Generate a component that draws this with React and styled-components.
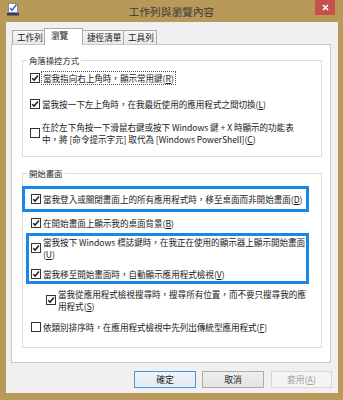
import React from 'react';
import styled, { createGlobalStyle } from 'styled-components';

const GlobalStyle = createGlobalStyle`
  html, body {
    margin: 0;
    padding: 0;
    background: #fff;
  }
  body {
    font-family: "Noto Sans CJK TC", "Noto Sans", sans-serif;
  }
`;

const Window = styled.div`
  width: 343px;
  height: 400px;
  box-sizing: border-box;
  background: #b8995a;
  display: flex;
  flex-direction: column;
  padding-bottom: 7px;
`;

const TitleBar = styled.div`
  height: 22px;
  display: grid;
  grid-template-columns: 1fr auto 1fr;
  align-items: start;
`;

const AppIcon = styled.div`
  padding: 3px 0 0 7px;
  display: flex;
`;

const Title = styled.div`
  font-size: 10.6px;
  line-height: 23px;
  color: #3b3b3b;
  letter-spacing: 0.1px;
`;

const CloseButton = styled.div`
  justify-self: end;
  width: 20px;
  height: 15px;
  margin-right: 8px;
  background: #c7504f;
  display: flex;
  align-items: center;
  justify-content: center;
`;

const Body = styled.div`
  flex: 1;
  margin: 0 5px 0 6px;
  background: #f0f0f0;
  display: flex;
  flex-direction: column;
  padding: 6px 7px 5px 5px;
  box-sizing: border-box;
`;

const TabRow = styled.div`
  display: flex;
  align-items: flex-end;
  padding-left: 1px;
  position: relative;
  z-index: 1;
  margin-bottom: -1px;
`;

const Tab = styled.div`
  width: ${(p) => p.$w}px;
  height: ${(p) => (p.$active ? 17 : 15)}px;
  box-sizing: border-box;
  border: 1px solid #acacac;
  border-bottom: ${(p) => (p.$active ? 'none' : '1px solid #c9c9c9')};
  margin-left: ${(p) => p.$ml || 0}px;
  background: ${(p) => (p.$active ? '#fff' : 'linear-gradient(#f6f6f6, #e9e9e9)')};
  font-size: 8.6px;
  line-height: ${(p) => (p.$active ? 13 : 13)}px;
  padding-left: ${(p) => p.$pl}px;
  color: #1a1a1a;
  white-space: nowrap;
`;

const Panel = styled.div`
  flex: 1;
  background: #fff;
  border: 1px solid #c9c9c9;
  padding: 9px 8px 0 10px;
  display: flex;
  flex-direction: column;
  gap: 10px;
`;

const Group = styled.fieldset`
  margin: 0;
  padding: ${(p) => p.$pad};
  border: 1px solid #dcdcdc;
  min-width: 0;
  display: flex;
  flex-direction: column;
`;

const Legend = styled.legend`
  font-size: 8.4px;
  line-height: 12px;
  color: #2a2a2a;
  padding: 0 2px;
  margin-left: 4px;
`;

const Row = styled.div`
  display: flex;
  align-items: center;
  gap: 2px;
  margin-top: ${(p) => p.$mt || 0}px;
  margin-left: ${(p) => p.$ml || 0}px;
`;

const Label = styled.span`
  font-size: 8.6px;
  line-height: 12px;
  white-space: nowrap;
  color: #1a1a1a;
  letter-spacing: -0.05px;
`;

const FocusLabel = styled(Label)`
  outline: 1px dotted #555;
  outline-offset: 0;
  padding: 0 1px;
`;

const Box = styled.span`
  width: 10px;
  height: 10px;
  flex: none;
  box-sizing: border-box;
  border: 1px solid #333;
  background: #fff;
  display: flex;
  align-items: center;
  justify-content: center;
`;

const Highlight = styled.div`
  box-sizing: border-box;
  border: 3px solid #1b87e6;
  width: ${(p) => p.$w}px;
  margin-left: ${(p) => p.$ml}px;
  margin-top: ${(p) => p.$mt}px;
  padding: ${(p) => p.$pad};
  display: flex;
  flex-direction: column;
`;

const ButtonRow = styled.div`
  display: flex;
  justify-content: flex-end;
  gap: 6px;
  margin-top: 8px;
  margin-right: -1px;
`;

const Button = styled.div`
  width: ${(p) => p.$w || 62}px;
  height: 17px;
  box-sizing: border-box;
  border: 1px solid ${(p) => (p.$primary ? '#4a94d6' : p.$disabled ? '#d7d7d7' : '#acacac')};
  background: ${(p) => (p.$disabled ? '#f4f4f4' : p.$primary ? 'linear-gradient(#eef4fa, #e3ebf3)' : 'linear-gradient(#efefef, #e3e3e3)')};
  color: ${(p) => (p.$disabled ? '#a3a3a3' : '#1a1a1a')};
  font-size: 8.8px;
  line-height: 15px;
  text-align: center;
  margin-left: ${(p) => p.$ml || 0}px;
`;

const Check = ({ on }) => (
  <Box>
    {on && (
      <svg width="8" height="8" viewBox="0 0 8 8">
        <path d="M1.2 4.2 L3.1 6.1 L6.9 1.6" fill="none" stroke="#1e1e1e" strokeWidth="1.5" />
      </svg>
    )}
  </Box>
);

const Item = ({ on, children, mt, ml, focus }) => (
  <Row $mt={mt} $ml={ml}>
    <Check on={on} />
    {focus ? <FocusLabel>{children}</FocusLabel> : <Label>{children}</Label>}
  </Row>
);

export default function App() {
  return (
    <>
      <GlobalStyle />
      <Window lang="zh-TW">
        <TitleBar>
          <AppIcon>
            <svg width="12" height="13" viewBox="0 0 12 13">
              <rect x="1.5" y="0.5" width="9" height="9" fill="#fff" stroke="#8a8a8a" />
              <path d="M3 5 L5 7.2 L9.5 1.5" fill="none" stroke="#2a6fd0" strokeWidth="1.6" />
              <rect x="0" y="10" width="12" height="2.5" fill="#2f3d62" />
            </svg>
          </AppIcon>
          <Title>工作列與瀏覽內容</Title>
          <CloseButton>
            <svg width="7" height="7" viewBox="0 0 7 7">
              <path d="M1 1 L6 6 M6 1 L1 6" stroke="#fff" strokeWidth="1.6" />
            </svg>
          </CloseButton>
        </TitleBar>
        <Body>
          <TabRow>
            <Tab $w={33} $pl={4}>工作列</Tab>
            <Tab $w={39} $pl={6} $active $ml={-1}>瀏覽</Tab>
            <Tab $w={42} $pl={4} $ml={-1}>捷徑清單</Tab>
            <Tab $w={34} $pl={4} $ml={-1}>工具列</Tab>
          </TabRow>
          <Panel>
            <Group $pad="0 0 11px 0">
              <Legend>角落操控方式</Legend>
              <Item on focus mt={6} ml={7}>
                當我指向右上角時，顯示常用鍵(<u>R</u>)
              </Item>
              <Item on mt={14} ml={7}>
                當我按一下左上角時，在我最近使用的應用程式之間切換(<u>L</u>)
              </Item>
              <Item mt={11} ml={7}>
                <>
                  在於左下角按一下滑鼠右鍵或按下 Windows 鍵 + X 時顯示的功能表
                  <br />
                  中，將 [命令提示字元] 取代為 [Windows PowerShell](<u>C</u>)
                </>
              </Item>
            </Group>
            <Group $pad="0 0 14px 0">
              <Legend>開始畫面</Legend>
              <Highlight $w={287} $ml={-1} $mt={7} $pad="4px 0 4px 6px">
                <Item on>
                  當我登入或關閉畫面上的所有應用程式時，移至桌面而非開始畫面(<u>D</u>)
                </Item>
              </Highlight>
              <Item on mt={5} ml={8}>
                在開始畫面上顯示我的桌面背景(<u>B</u>)
              </Item>
              <Highlight $w={283} $ml={3} $mt={4} $pad="0 0 1px 2px">
                <Item on>
                  <>
                    當我按下 Windows 標誌鍵時，在我正在使用的顯示器上顯示開始畫面
                    <br />
                    (<u>U</u>)
                  </>
                </Item>
                <Item on mt={8}>
                  當我移至開始畫面時，自動顯示應用程式檢視(<u>V</u>)
                </Item>
              </Highlight>
              <Item on mt={4} ml={23}>
                <>
                  當我從應用程式檢視搜尋時，搜尋所有位置，而不要只搜尋我的應
                  <br />
                  用程式(<u>S</u>)
                </>
              </Item>
              <Item mt={9} ml={8}>
                依類別排序時，在應用程式檢視中先列出傳統型應用程式(<u>F</u>)
              </Item>
            </Group>
          </Panel>
          <ButtonRow>
            <Button $primary>確定</Button>
            <Button>取消</Button>
            <Button $disabled $w={61} $ml={1}>
              套用(<u>A</u>)
            </Button>
          </ButtonRow>
        </Body>
      </Window>
    </>
  );
}
